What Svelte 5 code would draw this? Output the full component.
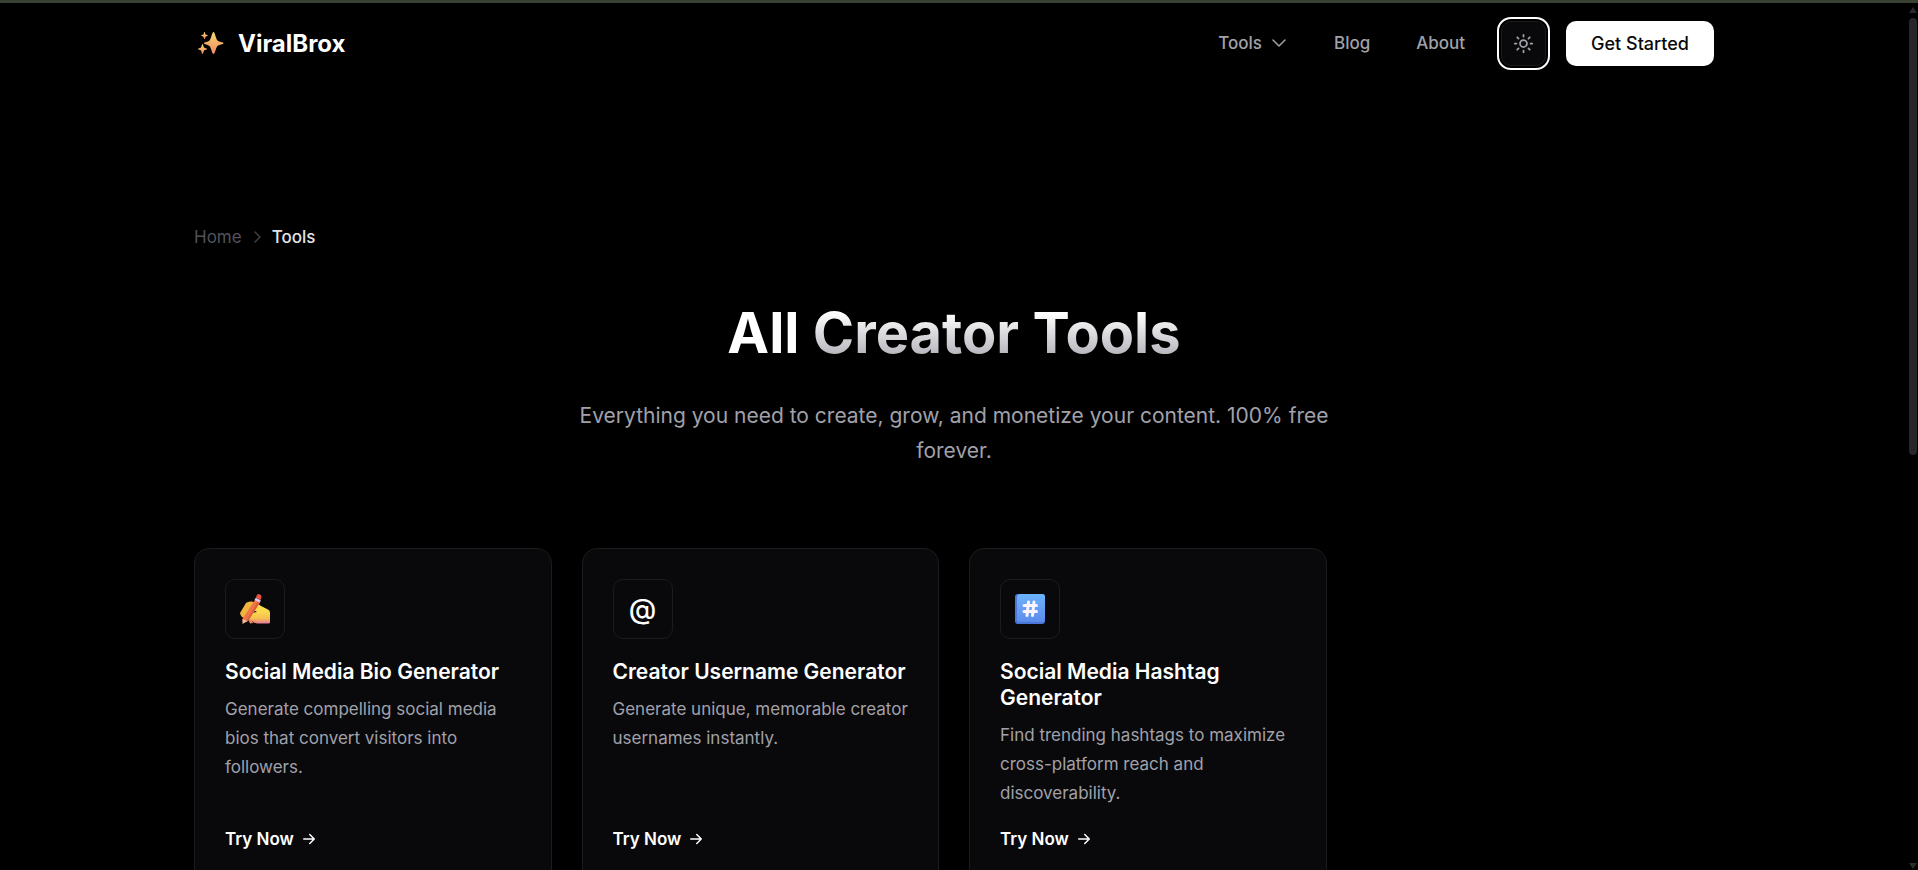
<script lang="ts">
	type Tool = { icon: 'write' | 'at' | 'hash'; title: string; text: string; href: string };

	const tools: Tool[] = [
		{
			icon: 'write',
			title: 'Social Media Bio Generator',
			text: 'Generate compelling social media bios that convert visitors into followers.',
			href: '#bio'
		},
		{
			icon: 'at',
			title: 'Creator Username Generator',
			text: 'Generate unique, memorable creator usernames instantly.',
			href: '#username'
		},
		{
			icon: 'hash',
			title: 'Social Media Hashtag Generator',
			text: 'Find trending hashtags to maximize cross-platform reach and discoverability.',
			href: '#hashtag'
		}
	];

	let light = $state(false);
	let menuOpen = $state(false);
</script>

<div class="page">
	<header class="header">
		<div class="container bar">
			<a class="logo" href="#home">
				<svg width="34" height="30" viewBox="0 0 34 30" aria-hidden="true">
					<defs>
						<linearGradient id="spark" x1="0" y1="0" x2="0" y2="1">
							<stop offset="0" stop-color="#f8d767" />
							<stop offset="1" stop-color="#f2896c" />
						</linearGradient>
					</defs>
					<g fill="url(#spark)">
						<path
							d="M19.500 4C21 4 21.500 10 23.500 12.500C25 14 29.500 14 29.500 15.200C29.500 16.400 25 16.500 23.500 18C21.500 20.500 21 26 19.500 26C18 26 17.500 20.500 15.500 18C14 16.500 10 16.400 10 15.200C10 14 14 14 15.500 12.500C17.500 10 18 4 19.500 4Z"
						/>
						<path
							d="M8.500 16C9.300 16 9.300 18.500 10 19.500C11 20.400 13 20.300 13 21C13 21.700 11 21.600 10 22.500C9.300 23.500 9.300 26 8.500 26C7.700 26 7.700 23.500 7 22.500C6 21.600 4 21.700 4 21C4 20.300 6 20.400 7 19.500C7.700 18.500 7.700 16 8.500 16Z"
						/>
						<path
							d="M10.500 4C11.200 4 11 6 11.700 6.600C12.500 7.200 14 7 14 7.600C14 8.200 12.500 8 11.700 8.700C11 9.400 11.200 11 10.500 11C9.800 11 10 9.400 9.300 8.700C8.500 8 7 8.200 7 7.600C7 7 8.500 7.200 9.300 6.600C10 6 9.800 4 10.500 4Z"
						/>
					</g>
				</svg>
				<span>ViralBrox</span>
			</a>
			<nav class="nav" aria-label="Main">
				<button
					class="link"
					type="button"
					aria-expanded={menuOpen}
					onclick={() => (menuOpen = !menuOpen)}
				>
					Tools
					<svg class="line" width="18" height="18" viewBox="0 0 18 18" aria-hidden="true">
						<path d="m3 6 6 6 6-6" />
					</svg>
				</button>
				<a class="link" href="#blog">Blog</a>
				<a class="link" href="#about">About</a>
			</nav>
			<div class="actions">
				<button
					class="theme"
					type="button"
					aria-label="Toggle theme"
					aria-pressed={light}
					onclick={() => (light = !light)}
				>
					<svg class="line" width="21" height="21" viewBox="0 0 24 24" aria-hidden="true">
						<circle cx="12" cy="12" r="4" />
						<path
							d="M12 2v2m0 16v2M4.900 4.900l1.400 1.400m11.400 11.400 1.400 1.400M2 12h2m16 0h2M6.300 17.700l-1.400 1.400M19.100 4.900l-1.400 1.400"
						/>
					</svg>
				</button>
				<a class="cta" href="#start">Get Started</a>
			</div>
		</div>
	</header>

	<main class="container">
		<nav class="crumbs" aria-label="Breadcrumb">
			<a href="#home">Home</a>
			<svg class="line" width="18" height="18" viewBox="0 0 18 18" aria-hidden="true">
				<path d="m7 4 5 5-5 5" />
			</svg>
			<span aria-current="page">Tools</span>
		</nav>

		<section class="hero">
			<h1>All <span>Creator Tools</span></h1>
			<p>Everything you need to create, grow, and monetize your content. 100% free forever.</p>
		</section>

		<section class="grid">
			{#each tools as tool}
				<article class="card">
					<div class="icon">
						{#if tool.icon === 'write'}
							<svg width="32" height="32" viewBox="0 0 32 32" aria-hidden="true">
								<defs>
									<linearGradient id="hand" x1="0" y1="0" x2="0" y2="1">
										<stop offset="0.400" stop-color="#fbd94e" />
										<stop offset="0.750" stop-color="#f4bd4f" />
										<stop offset="1" stop-color="#e8799c" />
									</linearGradient>
								</defs>
								<path
									fill="#f1b53f"
									d="M1 20 7 10Q9 8 13 8.500L20 11 15 19 6 25Q2 25 1 20Z"
								/>
								<path
									fill="url(#hand)"
									d="M15 11Q19 10 22 13L28 16Q31 17 31 20V29.500Q31 30.500 29 30.500H18Q15 30 13 28L10 27Q8 23 12 20L18 19Q14 17 14 15Z"
								/>
								<path fill="#e98b62" d="m9 26 4 1 1 3-3 .5zM15 27l3 3h-3z" />
								<path fill="#ef7446" d="m16.500 6 5 2.500L9 28l-5 2-.5-4Z" />
								<path fill="#d95e3d" d="m19.500 7.500 2 1L9 28l-2 .6Z" />
								<path fill="#f3b8a0" d="m3.500 26 5 2-5 3Z" />
								<path fill="#d9c9f2" d="m16.800 4.700 5 2.500-1.300 2.300-5-2.500Z" />
								<path fill="#e9533f" d="M18 2Q19 .5 21 1.500T22.500 4.500L21.500 7 16.700 4.600Z" />
							</svg>
						{:else if tool.icon === 'at'}
							@
						{:else}
							<svg width="30" height="30" viewBox="0 0 30 30" aria-hidden="true">
								<defs>
									<linearGradient id="key" x1="0" y1="0" x2="0" y2="1">
										<stop offset="0" stop-color="#6cb3fb" />
										<stop offset="1" stop-color="#5d8cec" />
									</linearGradient>
								</defs>
								<rect width="30" height="30" rx="3" fill="#4a76d8" />
								<rect x="2" y="0" width="28" height="28" rx="3" fill="url(#key)" />
								<path
									d="M9 11.500h12.500M9 17.500h12.500M13.500 8 12 21.500M19 8 17.500 21.500"
									fill="none"
									stroke="#fbf3ff"
									stroke-width="3"
									stroke-linecap="round"
								/>
							</svg>
						{/if}
					</div>
					<h2>{tool.title}</h2>
					<p>{tool.text}</p>
					<a class="try" href={tool.href}>
						Try Now
						<svg class="line" width="18" height="18" viewBox="0 0 24 24" aria-hidden="true">
							<path d="M5 12h14M13 6l6 6-6 6" />
						</svg>
					</a>
				</article>
			{/each}
		</section>
	</main>

	<div class="scrollbar" aria-hidden="true">
		<svg width="8" height="6" viewBox="0 0 8 6"><path d="M4 0 8 6H0Z" /></svg>
		<div class="track"><div class="thumb"></div></div>
		<svg width="8" height="6" viewBox="0 0 8 6"><path d="M0 0h8L4 6Z" /></svg>
	</div>
</div>

<style>
	:global(body) {
		margin: 0;
		background: #000;
	}

	.page {
		position: relative;
		box-sizing: border-box;
		height: 100vh;
		overflow: hidden;
		padding-right: 10px;
		border-top: 3px solid #374233;
		background: #000;
		color: #fff;
		font-family: Inter, 'Liberation Sans', sans-serif;
		font-size: 17px;
	}

	.container {
		box-sizing: border-box;
		max-width: 1600px;
		margin: 0 auto;
		padding: 0 40px;
	}

	a {
		color: inherit;
		text-decoration: none;
	}

	button {
		border: 0;
		padding: 0;
		background: none;
		color: inherit;
		font: inherit;
		cursor: pointer;
	}

	.line {
		fill: none;
		stroke: currentColor;
		stroke-width: 1.5;
		stroke-linecap: round;
		stroke-linejoin: round;
	}

	/* header */
	.bar {
		display: flex;
		align-items: center;
		height: 80px;
	}

	.logo {
		display: flex;
		align-items: center;
		gap: 10px;
		font-size: 24px;
		font-weight: 700;
	}

	.nav {
		display: flex;
		gap: 46px;
		margin: 0 36px 0 auto;
		color: #a1a1aa;
		font-weight: 500;
	}

	.link {
		display: flex;
		align-items: center;
		gap: 8px;
	}

	.actions {
		display: flex;
		gap: 20px;
	}

	.theme {
		display: grid;
		place-items: center;
		box-sizing: border-box;
		width: 45px;
		height: 45px;
		border: 1px solid #1c1c1f;
		border-radius: 10px;
		outline: 2px solid #fff;
		outline-offset: 2px;
		background: #09090b;
		color: #a1a1aa;
	}

	.theme svg {
		stroke-width: 2;
	}

	.cta {
		display: grid;
		place-items: center;
		height: 45px;
		padding: 0 25px;
		border-radius: 10px;
		background: #fff;
		color: #09090b;
		font-size: 18px;
		font-weight: 500;
	}

	/* breadcrumb */
	.crumbs {
		display: flex;
		align-items: center;
		gap: 6px;
		padding-top: 142px;
		line-height: 24px;
		color: #52525b;
	}

	.crumbs svg {
		color: #3f3f46;
	}

	.crumbs span {
		color: #e4e4e7;
		font-weight: 500;
	}

	/* hero */
	.hero {
		max-width: 800px;
		margin: 0 auto;
		padding: 51px 0 80px;
		text-align: center;
	}

	h1 {
		margin: 0 0 32px;
		font-size: 56px;
		line-height: 66px;
		font-weight: 700;
	}

	h1 span {
		background: linear-gradient(180deg, #fff 20%, #a1a1aa 100%);
		background-clip: text;
		color: transparent;
	}

	.hero p {
		margin: 0;
		color: #a1a1aa;
		font-size: 21px;
		line-height: 35px;
	}

	/* cards */
	.grid {
		display: grid;
		grid-template-columns: repeat(4, 1fr);
		gap: 30px;
	}

	.card {
		display: flex;
		flex-direction: column;
		padding: 30px;
		border: 1px solid #1c1c1f;
		border-radius: 15px;
		background: #09090b;
	}

	.icon {
		display: grid;
		place-items: center;
		box-sizing: border-box;
		width: 60px;
		height: 60px;
		margin-bottom: 20px;
		border: 1px solid #1c1c1f;
		border-radius: 10px;
		font-size: 28px;
		font-weight: 500;
	}

	h2 {
		margin: 0 0 10px;
		font-size: 21px;
		line-height: 26px;
		font-weight: 600;
	}

	.card p {
		margin: 0 0 16px;
		color: #a1a1aa;
		line-height: 29px;
	}

	.try {
		display: flex;
		align-items: center;
		gap: 6px;
		margin-top: auto;
		line-height: 30px;
		font-weight: 600;
	}

	.try svg {
		stroke-width: 2;
	}

	/* scrollbar */
	.scrollbar {
		position: absolute;
		top: 0;
		right: 0;
		bottom: 0;
		display: flex;
		flex-direction: column;
		align-items: center;
		gap: 5px;
		box-sizing: border-box;
		width: 10px;
		padding: 4px 0 1px;
		fill: #2a2a2d;
	}

	.track {
		flex: 1;
		width: 8px;
	}

	.thumb {
		height: 52%;
		border-radius: 4px;
		background: #27272a;
	}
</style>
